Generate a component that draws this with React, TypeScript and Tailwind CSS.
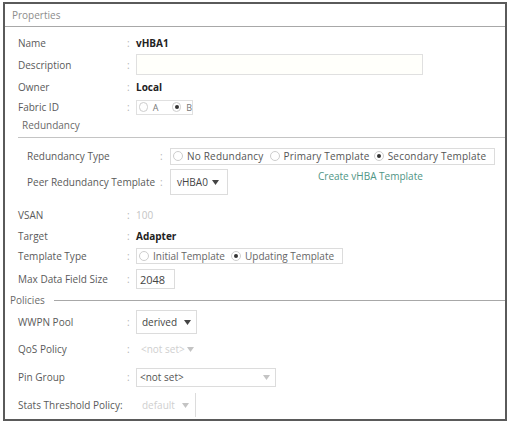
import type { ReactNode } from "react";

// Properties panel of a vHBA template form (UCS style)

function Radio({ on }: { on?: boolean }) {
  return (
    <span className="inline-flex items-center justify-center w-[10px] h-[10px] rounded-full border border-[#cdcdcd] bg-white mr-[4px]">
      {on && <span className="w-[4px] h-[4px] rounded-full bg-[#333]" />}
    </span>
  );
}

function Caret({ muted }: { muted?: boolean }) {
  return (
    <svg width="7" height="5" viewBox="0 0 7 5" className="ml-auto">
      <path d="M0 0h7L3.5 5z" fill={muted ? "#c4c4c4" : "#444"} />
    </svg>
  );
}

function Row({ label, h, children }: { label: string; h: string; children?: ReactNode }) {
  return (
    <div className={`flex items-center pl-[13px] ${h}`}>
      <span className="w-[109px] text-[#5a5a5a]">{label}</span>
      <span className="w-[9px] text-[#b4b4b4]">:</span>
      {children}
    </div>
  );
}

function SubRow({ label, h, children }: { label: string; h: string; children?: ReactNode }) {
  return (
    <div className={`flex items-center pl-[22px] ${h}`}>
      <span className="w-[133px] text-[#5a5a5a]">{label}</span>
      <span className="w-[10px] text-[#b4b4b4]">:</span>
      {children}
    </div>
  );
}

export default function App() {
  return (
    <div className="w-[510px] h-[424px] bg-white pt-[2px] pl-[3px] text-[10px] leading-none" style={{ fontFamily: '"Open Sans", "Liberation Sans", sans-serif' }}>
      <div className="w-[504px] h-[419px] border-2 border-[#5a5a5a] flex flex-col overflow-hidden">
        <div className="h-[23px] flex items-center pl-[7px] border-b border-[#a8a8a8] text-[#8c8c8c]">Properties</div>

        <div className="pt-[6px] flex flex-col">
          <Row label="Name" h="h-[20px]">
            <span className="font-bold text-[#222]">vHBA1</span>
          </Row>
          <Row label="Description" h="h-[23px]">
            <div className="w-[287px] h-[21px] border border-[#e0e0e0] bg-[#fffffb]" />
          </Row>
          <Row label="Owner" h="h-[21px]">
            <span className="font-bold text-[#222]">Local</span>
          </Row>
          <Row label="Fabric ID" h="h-[20px]">
            <div className="w-[57px] h-[15px] border border-[#e0e0e0] flex items-center pl-[2px] text-[#777] text-[9px]">
              <Radio />
              <span className="ml-[1px] mr-[14px]">A</span>
              <Radio on />
              <span className="ml-[1px]">B</span>
            </div>
          </Row>
          <div className="h-[16px] flex items-center pl-[17px] text-[#6a6a6a]">Redundancy</div>
          <div className="mt-[4px] ml-[13px] border-t border-[#c4c4c4]" />

          <div className="pt-[8px] flex flex-col">
            <SubRow label="Redundancy Type" h="h-[20px]">
              <div className="w-[325px] h-[17px] border border-[#dcdcdc] flex items-center pl-[2px] text-[#555] tracking-[0.2px]">
                <Radio />
                <span className="mr-[6px]">No Redundancy</span>
                <Radio />
                <span className="mr-[4px]">Primary Template</span>
                <Radio on />
                <span>Secondary Template</span>
              </div>
            </SubRow>
            <div className="mt-[2px] flex items-center h-[28px]">
              <SubRow label="Peer Redundancy Template" h="h-[28px]">
                <div className="w-[58px] h-[26px] border border-[#dcdcdc] flex items-center px-[6px] pr-[8px] text-[#444]">
                  <span>vHBA0</span>
                  <Caret />
                </div>
              </SubRow>
              <span className="ml-[90px] self-start mt-[3px] text-[#4f9585]">Create vHBA Template</span>
            </div>
          </div>

          <div className="mt-[9px] flex flex-col">
            <Row label="VSAN" h="h-[20px]">
              <span className="text-[#c4c4c4]">100</span>
            </Row>
            <Row label="Target" h="h-[21px]">
              <span className="font-bold text-[#222]">Adapter</span>
            </Row>
            <Row label="Template Type" h="h-[20px]">
              <div className="w-[207px] h-[16px] border border-[#dcdcdc] flex items-center pl-[2px] text-[#666]">
                <Radio />
                <span className="mr-[6px]">Initial Template</span>
                <Radio on />
                <span>Updating Template</span>
              </div>
            </Row>
            <Row label="Max Data Field Size" h="h-[26px]">
              <div className="w-[39px] h-[20px] border border-[#dcdcdc] flex items-center pl-[3px] text-[#444] text-[11px]">2048</div>
            </Row>
          </div>

          <div className="h-[16px] flex items-center pl-[5px] text-[#6a6a6a]">
            <span>Policies</span>
            <div className="flex-1 ml-[9px] border-t border-[#a8a8a8]" />
          </div>

          <Row label="WWPN Pool" h="h-[28px]">
            <div className="w-[61px] h-[24px] border border-[#dcdcdc] flex items-center pl-[5px] pr-[5px] text-[#444]">
              <span>derived</span>
              <Caret />
            </div>
          </Row>
          <Row label="QoS Policy" h="h-[26px]">
            <div className="w-[60px] h-[18px] flex items-center pl-[5px] pr-[2px] text-[#cfcfcf]">
              <span>&lt;not set&gt;</span>
              <Caret muted />
            </div>
          </Row>
          <Row label="Pin Group" h="h-[30px]">
            <div className="w-[140px] h-[19px] border border-[#dcdcdc] flex items-center pl-[3px] pr-[5px] text-[#555]">
              <span>&lt;not set&gt;</span>
              <Caret muted />
            </div>
          </Row>
          <div className="flex items-center pl-[13px] h-[26px]">
            <span className="w-[118px] text-[#5a5a5a]">Stats Threshold Policy:</span>
            <div className="w-[60px] h-[24px] border-r border-[#dcdcdc] flex items-center pl-[6px] pr-[6px] text-[#cfcfcf]">
              <span>default</span>
              <Caret muted />
            </div>
          </div>
        </div>
      </div>
    </div>
  );
}
